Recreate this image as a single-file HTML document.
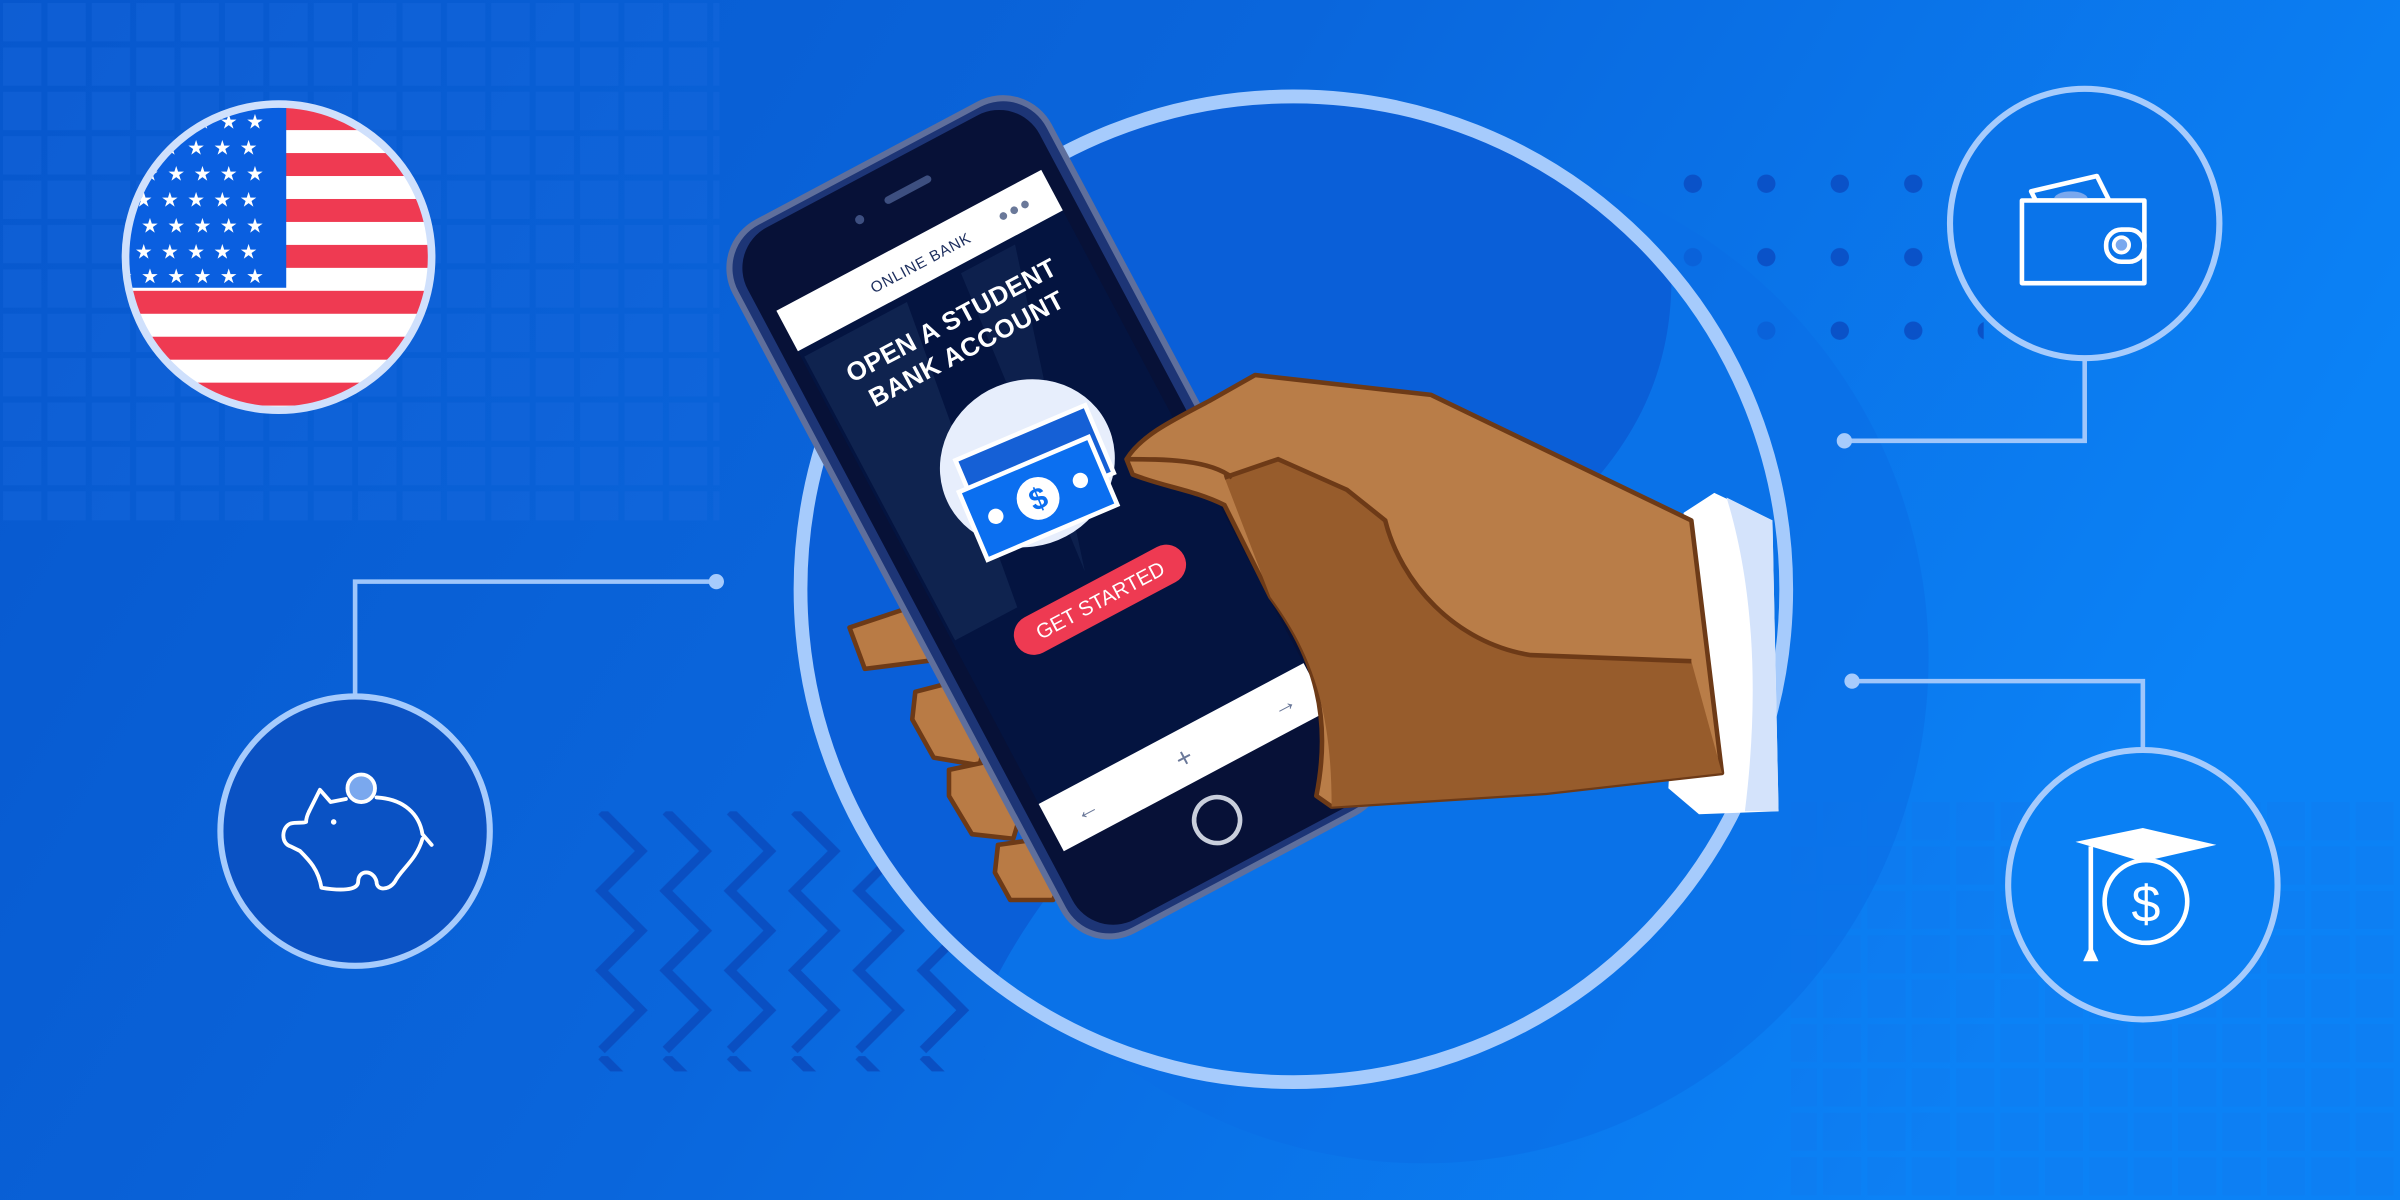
<!DOCTYPE html>
<html><head><meta charset="utf-8"><style>
html,body{margin:0;padding:0;width:2400px;height:1200px;overflow:hidden;background:#0a62da}
svg{display:block}
</style></head><body>
<svg width="2400" height="1200" viewBox="0 0 1568 784" xmlns="http://www.w3.org/2000/svg" font-family="Liberation Sans, sans-serif">
<defs>
<linearGradient id="bg" x1="0" y1="0" x2="1" y2="0.3">
<stop offset="0" stop-color="#0757cd"/><stop offset="0.5" stop-color="#0a66dc"/><stop offset="1" stop-color="#0b82f6"/>
</linearGradient>
<clipPath id="fc"><circle cx="182" cy="168" r="98"/></clipPath>
<clipPath id="bc"><circle cx="845" cy="385" r="318"/></clipPath>
<pattern id="sq" width="29" height="29" patternUnits="userSpaceOnUse"><rect x="2" y="2" width="25" height="25" fill="#1a6ae0" opacity="0.5"/></pattern>
<pattern id="dots" x="1096" y="112" width="48" height="48" patternUnits="userSpaceOnUse"><circle cx="10" cy="8" r="6" fill="#0a52c8"/></pattern>
<pattern id="zz" x="383" y="530" width="42" height="160" patternUnits="userSpaceOnUse"><path d="M10 0 L36 26 L10 52 L36 78 L10 104 L36 130 L10 156" fill="none" stroke="#0a4fc2" stroke-width="6"/></pattern>
</defs>
<rect width="1568" height="784" fill="url(#bg)"/>
<rect x="0" y="0" width="470" height="340" fill="url(#sq)" opacity="0.7"/>
<rect x="1170" y="520" width="398" height="264" fill="url(#sq)" opacity="0.25"/>
<rect x="383" y="530" width="260" height="170" fill="url(#zz)"/>
<rect x="1096" y="112" width="200" height="115" fill="url(#dots)"/>
<circle cx="930" cy="430" r="330" fill="#0a6ee6" opacity="0.6"/>
<circle cx="845" cy="385" r="318" fill="#0a5fd8"/>
<g clip-path="url(#bc)">
<path d="M1080 100 C1120 250 1060 330 900 420 C760 500 650 560 600 784 L1200 784 L1200 100 Z" fill="#0a72e8"/>
</g>
<circle cx="845" cy="385" r="322" fill="none" stroke="#a6cbfc" stroke-width="9"/>
<g stroke="#9fc6fb" stroke-width="3" fill="none">
<path d="M232 455 V380 H468"/><path d="M1362 234 V288 H1205"/><path d="M1400 490 V445 H1210"/>
</g>
<g fill="#a6cbfc"><circle cx="468" cy="380" r="5"/><circle cx="1205" cy="288" r="5"/><circle cx="1210" cy="445" r="5"/></g>
<g fill="none" stroke="#a6cbfc" stroke-width="4">
<circle cx="232" cy="543" r="88" fill="#0a52c4"/>
<circle cx="1362" cy="146" r="88" fill="#0a74ea"/>
<circle cx="1400" cy="578" r="88" fill="#0a80f4"/>
</g>
<!-- piggy -->
<g fill="none" stroke="#fff" stroke-width="2.5" stroke-linejoin="round" stroke-linecap="round">
<path d="M202 530 L209 516 L216 524 L226 522"/>
<path d="M246 521 C264 522 274 532 276 545 L282 552"/>
<path d="M276 548 C272 562 262 568 258 576 C254 582 246 582 246 576 C244 568 234 568 234 576 C234 582 222 582 210 580 C208 568 202 562 196 556 L190 553 C183 551 184 540 190 538 C194 537 198 538 200 537 C200 535 201 532 202 530"/>
</g>
<circle cx="236" cy="515" r="9" fill="#7aa8ee" stroke="#fff" stroke-width="2.5"/>
<circle cx="218" cy="537" r="1.8" fill="#fff"/>
<!-- wallet -->
<path d="M1327 125 L1370 115 L1378 131 L1330 131 Z" fill="none" stroke="#fff" stroke-width="3" stroke-linejoin="round"/>
<ellipse cx="1353" cy="130" rx="11" ry="5" fill="#7aa8ee"/>
<g fill="none" stroke="#fff" stroke-width="3" stroke-linejoin="round">
<rect x="1321" y="131" width="80" height="54" fill="#0a74ea"/>
<rect x="1376" y="150" width="25" height="21" rx="10"/>
</g>
<circle cx="1386" cy="160" r="5" fill="#7aa8ee" stroke="#fff" stroke-width="2.5"/>
<!-- grad -->
<g fill="none" stroke="#fff" stroke-width="3"><line x1="1366" y1="553" x2="1366" y2="625"/><circle cx="1402" cy="589" r="27"/></g>
<path d="M1356 550 L1400 541 L1448 552 L1400 563 Z" fill="#fff"/>
<path d="M1361 628 L1371 628 L1366 617 Z" fill="#fff"/>
<text x="1402" y="602" font-size="34" fill="#fff" text-anchor="middle">$</text>
<!-- flag -->
<g clip-path="url(#fc)">
<rect x="70" y="60" width="230" height="230" fill="#fff"/>
<g fill="#ef3a52">
<rect x="70" y="70" width="230" height="15"/><rect x="70" y="100" width="230" height="15"/><rect x="70" y="130" width="230" height="15"/><rect x="70" y="160" width="230" height="15"/><rect x="70" y="190" width="230" height="15"/><rect x="70" y="220" width="230" height="15"/><rect x="70" y="250" width="230" height="15"/>
</g>
<rect x="70" y="60" width="117" height="128" fill="#0a5fe0"/>
<g fill="#fff" font-size="13">
<text x="75" y="84" letter-spacing="5.5">★★★★★★</text><text x="88" y="101" letter-spacing="5.5">★★★★★</text><text x="75" y="118" letter-spacing="5.5">★★★★★★</text><text x="88" y="135" letter-spacing="5.5">★★★★★</text><text x="75" y="152" letter-spacing="5.5">★★★★★★</text><text x="88" y="169" letter-spacing="5.5">★★★★★</text><text x="75" y="185" letter-spacing="5.5">★★★★★★</text>
</g>
</g>
<circle cx="182" cy="168" r="100" fill="none" stroke="#cfe0fc" stroke-width="5"/>
<!-- fingers -->
<g fill="#b97b45" stroke="#6d3a17" stroke-width="3" stroke-linejoin="round">
<path d="M555 410 L600 395 L620 430 L565 437 Z"/>
<path d="M598 452 L625 445 L645 480 L640 500 L610 495 L596 470 Z"/>
<path d="M620 503 L648 497 L668 528 L662 548 L635 545 L620 520 Z"/>
<path d="M652 552 L680 548 L694 575 L688 588 L660 588 L650 570 Z"/>
</g>
<!-- phone -->
<g transform="translate(690,338) rotate(-28)">
<rect x="-116" y="-262" width="232" height="524" rx="34" fill="#1d3576" stroke="#5f6f9c" stroke-width="4"/>
<rect x="-108" y="-256" width="216" height="512" rx="30" fill="#071137"/>
<rect x="-98" y="-205" width="196" height="400" fill="#041440"/>
<path d="M-96 -170 L-20 -170 L-50 40 L-96 40 Z" fill="#24406e" opacity="0.35"/>
<path d="M20 -170 L60 -170 L0 40 Z" fill="#24406e" opacity="0.3"/>
<rect x="-98" y="-205" width="196" height="30" fill="#fff"/>
<text x="0" y="-185" font-size="10" fill="#1d2e5e" text-anchor="middle" letter-spacing="0.5">ONLINE BANK</text>
<g fill="#6a7899"><circle cx="62" cy="-190" r="2.5"/><circle cx="70" cy="-190" r="2.5"/><circle cx="78" cy="-190" r="2.5"/></g>
<text x="0" y="-140" font-size="17" fill="#fff" text-anchor="middle" font-weight="bold" letter-spacing="0.3">OPEN A STUDENT</text>
<text x="0" y="-119" font-size="17" fill="#fff" text-anchor="middle" font-weight="bold" letter-spacing="0.3">BANK ACCOUNT</text>
<ellipse cx="0" cy="-40" rx="58" ry="54" fill="#e7eefc"/>
<g transform="rotate(5)">
<rect x="-46" y="-60" width="92" height="48" fill="#1560d6" stroke="#fff" stroke-width="3"/>
<rect x="-52" y="-40" width="92" height="48" fill="#0b6ff0" stroke="#fff" stroke-width="3"/>
<circle cx="-6" cy="-16" r="14" fill="#fff"/><text x="-6" y="-9" font-size="20" fill="#0b6ff0" text-anchor="middle" font-weight="bold">$</text>
<circle cx="-36" cy="-16" r="5" fill="#fff"/><circle cx="24" cy="-16" r="5" fill="#fff"/>
</g>
<rect x="-62" y="48" width="124" height="26" rx="13" fill="#ee3a52"/>
<text x="0" y="66" font-size="13.5" fill="#fff" text-anchor="middle">GET STARTED</text>
<rect x="-98" y="160" width="196" height="35" fill="#fff"/>
<text x="-80" y="183" font-size="16" fill="#6a7899">←</text><text x="0" y="184" font-size="18" fill="#6a7899" text-anchor="middle">+</text><text x="82" y="183" font-size="16" fill="#6a7899" text-anchor="end">→</text>
<circle cx="0" cy="224" r="15" fill="none" stroke="#c9cfdc" stroke-width="3"/>
<circle cx="-22" cy="-232" r="3" fill="#3d4f80"/><rect x="-2" y="-237" width="34" height="5" rx="2.5" fill="#3d4f80"/>
</g>
<!-- cuff -->
<path d="M1100 335 L1120 322 L1158 340 L1162 530 L1110 532 L1090 515 Z" fill="#fff"/>
<path d="M1128 325 L1158 340 L1162 530 L1140 530 C1150 450 1145 380 1128 325Z" fill="#d4e3fb"/>
<!-- hand -->
<path d="M736 300 C745 285 765 275 790 262 L820 245 L935 258 L1105 340 L1125 505 L1010 518 L870 527 L860 520 C870 470 860 430 830 390 L800 330 C780 320 760 318 740 310 Z" fill="#b97d48" stroke="#6d3a17" stroke-width="3" stroke-linejoin="round"/>
<path d="M800 312 L835 300 L880 320 L905 340 C915 380 950 420 1000 428 L1105 432 L1125 505 L1010 518 L870 527 C870 470 860 430 830 390 Z" fill="#975c2c"/>
<path d="M800 312 L835 300 L880 320 L905 340 C915 380 950 420 1000 428 L1105 432" fill="none" stroke="#6d3a17" stroke-width="3"/>
<path d="M736 300 C760 300 790 300 805 312" fill="none" stroke="#6d3a17" stroke-width="3"/>
</svg>
</body></html>
